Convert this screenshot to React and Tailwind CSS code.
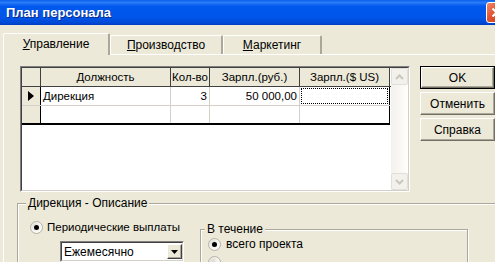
import { useState } from 'react'

function Radio({ checked }) {
  return (
    <span className="flex h-[13px] w-[13px] shrink-0 items-center justify-center rounded-full border border-[#B4B2A6] bg-[radial-gradient(circle_at_35%_35%,#DCDAD0_0%,#F4F3EE_45%,#FFFFFF_100%)]">
      {checked && <span className="h-[5px] w-[5px] rounded-full bg-black" />}
    </span>
  )
}

function Tab({ active, w, children }) {
  return (
    <div
      className={`flex items-center justify-center rounded-t-[2px] border-t border-l border-r-2 border-t-white border-l-white border-r-[#ACA899] bg-[#ECE9D8] ${
        active ? 'relative z-10 -mb-px h-[22px] pb-[2px]' : 'h-[19px]'
      } ${w}`}
    >
      {children}
    </div>
  )
}

function Button({ primary, children }) {
  return (
    <div className={`h-[23px] ${primary ? 'border border-black' : ''}`}>
      <div className="flex h-full items-center justify-center border border-t-white border-l-white border-b-[#716F64] border-r-[#716F64] bg-[#ECE9D8] shadow-[inset_-1px_-1px_0_#ACA899]">
        {children}
      </div>
    </div>
  )
}

const head = 'flex h-full items-center justify-center border-r border-[#404040] bg-[#ECE9D8]'
const cell = 'flex h-full items-center border-r border-[#D4D0C8] px-[2px]'

export default function App() {
  const [tab] = useState(0)

  return (
    <div className="h-[262px] w-[495px] overflow-hidden whitespace-nowrap bg-[#ECE9D8] font-['Liberation_Sans',Arial,sans-serif] text-[11.5px] leading-[14px] text-black">
      <div className="w-[510px]">
        {/* Title bar */}
        <div className="flex h-[25px] items-center justify-between pl-[6px] pr-[3px] bg-[linear-gradient(to_bottom,#0B5FE9_0%,#2A7BF8_10%,#0058EE_25%,#0055E8_70%,#0048D6_92%,#003CC0_100%)]">
          <span className="text-[13px] font-bold text-white [text-shadow:1px_1px_0_#0A2A8A]">План персонала</span>
          <div className="flex h-[21px] w-[21px] items-center justify-center rounded-[3px] border border-white bg-[linear-gradient(135deg,#EE8A6E_0%,#E0522F_45%,#C7381A_100%)]">
            <svg width="11" height="11" viewBox="0 0 11 11">
              <path d="M1.5 1.5 L9.5 9.5 M9.5 1.5 L1.5 9.5" stroke="white" strokeWidth="2" />
            </svg>
          </div>
        </div>

        {/* Tabs */}
        <div className="mt-[8px] flex h-[21px] items-end pl-[3px] text-[12px]">
          <Tab active={tab === 0} w="w-[107px]">
            <span><u>У</u>правление</span>
          </Tab>
          <Tab w="w-[113px]">
            <span><u>П</u>роизводство</span>
          </Tab>
          <Tab w="w-[99px]">
            <span><u>М</u>аркетинг</span>
          </Tab>
        </div>

        {/* Tab page */}
        <div className="ml-[3px] border-t border-l border-white pl-[16px] pt-[11px]">
          <div className="flex items-start gap-[10px]">
            {/* Grid */}
            <div className="h-[126px] w-[390px] border border-t-[#808080] border-l-[#808080] border-b-white border-r-white">
              <div className="flex h-full border border-t-[#404040] border-l-[#404040] border-b-[#D4D0C8] border-r-[#D4D0C8] bg-white">
                <div className="flex-1">
                  <div className="flex h-[19px] border-b border-[#404040]">
                    <div className={`${head} w-[19px]`} />
                    <div className={`${head} w-[130px]`}>Должность</div>
                    <div className={`${head} w-[39px]`}>Кол-во</div>
                    <div className={`${head} w-[90px]`}>Зарпл.(руб.)</div>
                    <div className={`${head} w-[90px]`}>Зарпл.($ US)</div>
                  </div>
                  <div className="flex h-[19px] w-[368px] border-b border-[#D4D0C8]">
                    <div className="flex h-full w-[19px] items-center justify-center border-r border-black bg-[#ECE9D8]">
                      <svg width="6" height="10" viewBox="0 0 6 10"><path d="M0 0 L6 5 L0 10 Z" fill="black" /></svg>
                    </div>
                    <div className={`${cell} w-[130px]`}>Дирекция</div>
                    <div className={`${cell} w-[39px] justify-end`}>3</div>
                    <div className={`${cell} w-[90px] justify-end`}>50 000,00</div>
                    <div className="h-full w-[90px] border-r border-black p-px">
                      <div className="h-full border border-dotted border-black" />
                    </div>
                  </div>
                  <div className="flex h-[19px] w-[368px] border-b-2 border-black">
                    <div className="h-full w-[19px] border-r border-black bg-[#ECE9D8]" />
                    <div className={`${cell} w-[130px]`} />
                    <div className={`${cell} w-[39px]`} />
                    <div className={`${cell} w-[90px]`} />
                    <div className="h-full w-[90px] border-r border-black" />
                  </div>
                </div>
                {/* Scrollbar (disabled) */}
                <div className="flex w-[17px] flex-col justify-between bg-[linear-gradient(to_right,#F3F1EC,#FEFEFB)]">
                  <div className="flex h-[17px] items-center justify-center rounded-[2px] border border-[#E2E0D6] bg-[#F2F1EB]">
                    <svg width="9" height="6" viewBox="0 0 9 6"><path d="M1 5 L4.5 1.5 L8 5" stroke="#C9C7BA" strokeWidth="2" fill="none" /></svg>
                  </div>
                  <div className="flex h-[17px] items-center justify-center rounded-[2px] border border-[#E2E0D6] bg-[#F2F1EB]">
                    <svg width="9" height="6" viewBox="0 0 9 6"><path d="M1 1 L4.5 4.5 L8 1" stroke="#C9C7BA" strokeWidth="2" fill="none" /></svg>
                  </div>
                </div>
              </div>
            </div>

            {/* Buttons */}
            <div className="flex w-[75px] flex-col gap-[3px] text-[12px]">
              <Button primary>OK</Button>
              <Button>Отменить</Button>
              <Button>Справка</Button>
            </div>
          </div>

          {/* Description group */}
          <fieldset className="-ml-[3px] mt-[4px] h-[90px] w-[520px] border border-[#ACA899] shadow-[inset_1px_1px_0_#fff]">
            <legend className="ml-[8px] bg-[#ECE9D8] px-[2px] text-[12px]">Дирекция - Описание</legend>
            <div className="flex items-start pl-[12px] text-[12px]">
              <div className="w-[154px]">
                <div className="mt-[10px] flex h-[14px] items-center gap-[4px]">
                  <Radio checked />
                  <span className="text-[11.5px]">Периодические выплаты</span>
                </div>
                <div className="ml-[30px] mt-[7px] flex h-[21px] w-[124px] border border-t-[#808080] border-l-[#808080] border-b-white border-r-white">
                  <div className="flex flex-1 items-center border border-t-[#404040] border-l-[#404040] border-b-[#D4D0C8] border-r-[#D4D0C8] bg-white pl-[2px]">
                    <span className="flex-1">Ежемесячно</span>
                    <div className="flex h-[15px] w-[15px] items-center justify-center border border-t-white border-l-white border-b-[#404040] border-r-[#404040] bg-[#ECE9D8] shadow-[inset_-1px_-1px_0_#ACA899]">
                      <svg width="7" height="4" viewBox="0 0 7 4"><path d="M0 0 L7 0 L3.5 4 Z" fill="black" /></svg>
                    </div>
                  </div>
                </div>
              </div>

              <fieldset className="ml-[16px] mt-[12px] h-[60px] w-[268px] border border-[#ACA899] shadow-[inset_1px_1px_0_#fff,1px_1px_0_#fff]">
                <legend className="ml-[4px] bg-[#ECE9D8] px-[2px]">В течение</legend>
                <div className="pl-[7px]">
                  <div className="mt-px flex h-[14px] items-center gap-[5px]">
                    <Radio checked />
                    <span>всего проекта</span>
                  </div>
                  <div className="mt-[4px] flex h-[14px] items-center gap-[5px]">
                    <Radio />
                  </div>
                </div>
              </fieldset>
            </div>
          </fieldset>
        </div>
      </div>
    </div>
  )
}
